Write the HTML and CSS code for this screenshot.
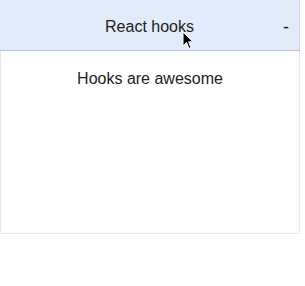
FILE: index.html
```html
<!DOCTYPE html>
<html>
<head>
    <meta charset="UTF-8">
    <link rel="stylesheet" href="styles.css">
</head>
<body>
    <div class="accordion">
        <div class="accordion-header">
            <span class="accordion-title">React hooks</span>
            <span class="accordion-toggle">-</span>
            <svg class="cursor" width="12" height="20" viewBox="0 0 12 20">
                <path d="M1 1 L1 15 L4.5 11.5 L7 17.5 L9 16.6 L6.6 10.8 L11 10.8 Z" fill="#000" stroke="#fff" stroke-width="1"/>
            </svg>
        </div>
        <div class="accordion-body">
            <p>Hooks are awesome</p>
        </div>
    </div>
</body>
</html>
```

FILE: styles.css
```css
body {
    margin: 0;
    font-family: "Liberation Sans", Arial, sans-serif;
    color: #222;
    background: #fff;
}

.accordion {
    width: 300px;
}

.accordion-header {
    position: relative;
    display: flex;
    align-items: center;
    justify-content: center;
    height: 51px;
    padding-top: 4px;
    background-color: #e2ebf9;
    border-bottom: 1px solid #bcc4cf;
    border-right: 1px solid #d4dcea;
    box-sizing: border-box;
    font-size: 16px;
}

.accordion-toggle {
    position: absolute;
    right: 10px;
    top: 17px;
    font-size: 18px;
    color: #111;
}

.cursor {
    position: absolute;
    left: 182px;
    top: 31px;
}

.accordion-body {
    height: 183px;
    border: 1px solid #e2ebf6;
    border-top: none;
    box-sizing: border-box;
    text-align: center;
    font-size: 16px;
}

.accordion-body p {
    margin: 0;
    padding-top: 19px;
}
```
